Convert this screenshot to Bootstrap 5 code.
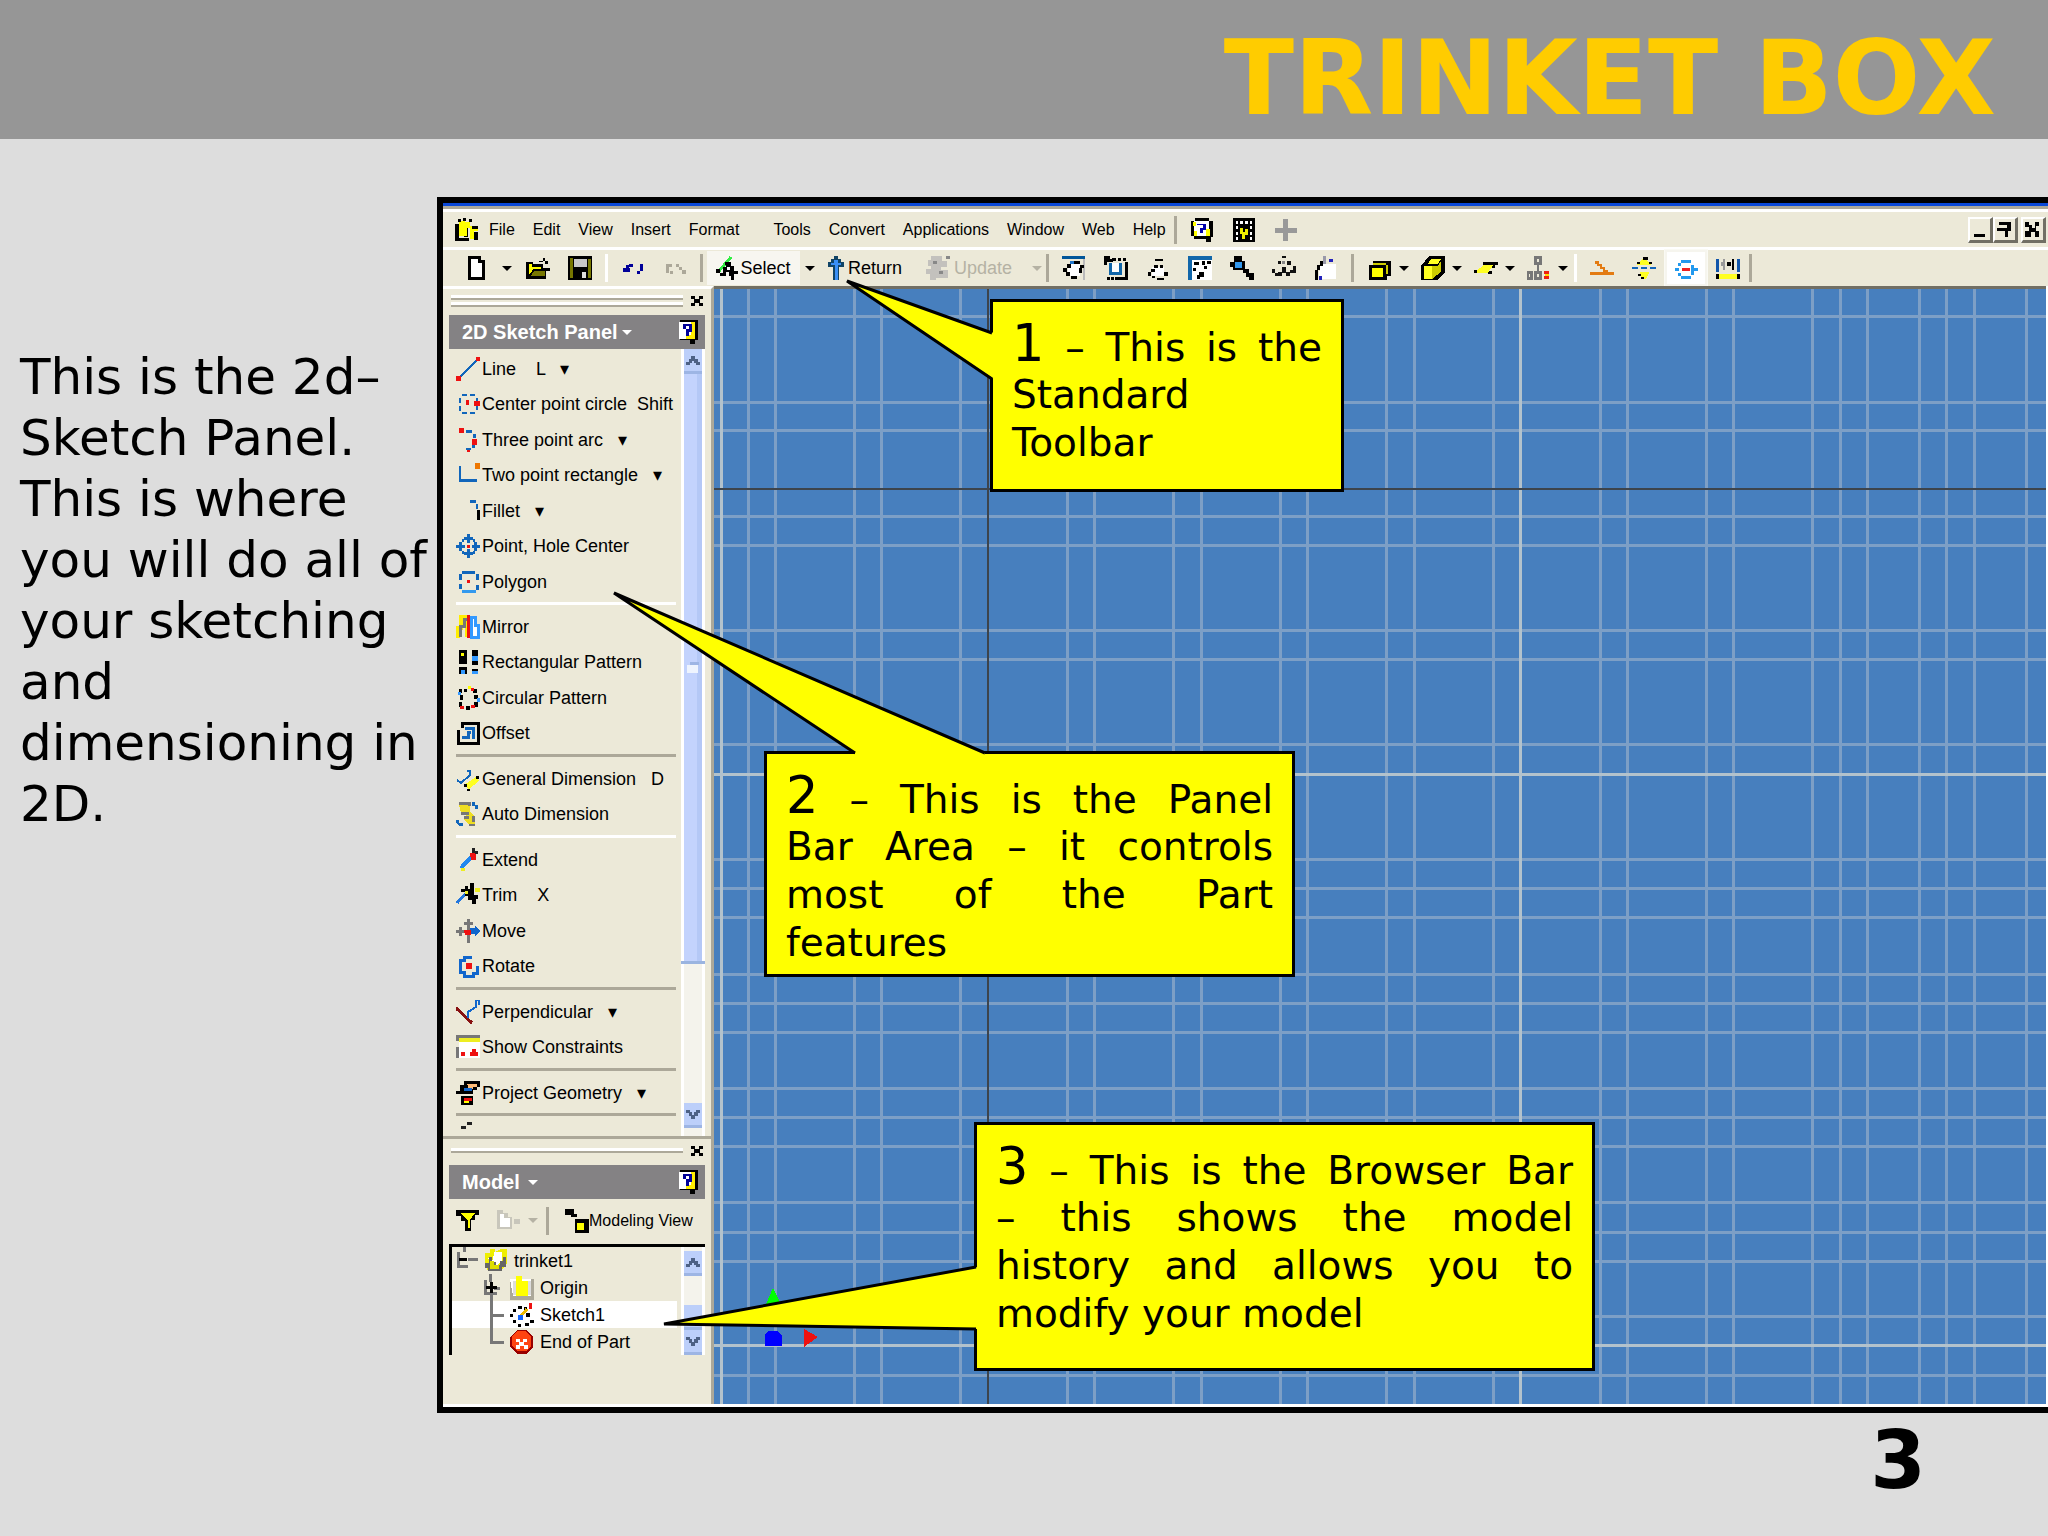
<!DOCTYPE html>
<html lang="en">
<head>
<meta charset="utf-8">
<meta name="viewport" content="width=device-width, initial-scale=1">
<title>Trinket Box</title>
<link href="https://cdn.jsdelivr.net/npm/bootstrap@5.3.0/dist/css/bootstrap.min.css" rel="stylesheet">
<style>
body{background:#ddd;color:#000;font-family:"DejaVu Sans",Verdana,sans-serif}
.slide-head{background:#969696;height:139px;padding:16px 52px 0 0}
.slide-title{color:#fc0;font-size:103px;line-height:120px;font-weight:700}
.slide-note{width:437px;padding:208px 0 0 20px;font-size:50px;line-height:61px}
.slide-no{font-size:80px;line-height:88px;padding-right:122px;font-weight:700}
.app{border:6px solid #000;border-right:0;margin-top:58px;background:#ece9d8;font-family:"Liberation Sans",Arial,sans-serif;font-size:18px;line-height:24px;position:relative;min-width:0}
.app button{background:none;border:0;padding:0;color:#000;line-height:24px}
.app svg{shape-rendering:crispEdges;flex:none}
.frame-top{height:9px;background:linear-gradient(#0a48d8 0 3px,#aca899 3px 6px,#fff 6px)}
.menus{height:35px;padding-left:12px}
.menus ul{gap:18px;margin-left:10px;font-size:16px}
.bar-line{height:3px;background:#fff}
.tools{height:36px;padding-left:12px;background:#ece9d8}
.ic{width:24px;height:24px}
.tb{width:42px;height:36px;display:flex;align-items:center;justify-content:center}
.app .combo{width:53px;padding-left:10px;gap:7px;justify-content:flex-start}
.app .drop{width:20px;height:36px;display:flex;align-items:center;justify-content:center}
.caret{width:0;height:0;border:5px solid transparent;border-top-color:currentColor;border-bottom:0;display:inline-block}
.vsep{width:3px;height:28px;background:#aca899;margin:0 4px;flex:none}
.vsep.lit{background:#fff}
.app .picked{background:#fff;border:2px solid #f6f5ee;outline:1px solid #fafaf4}
.app .select-tool{width:93px;height:34px;background:#f7f6f0}
.app .ghost{color:#b5b2a4}
.win-btns{margin-left:auto;gap:3px;padding-right:2px}
.app .wb{width:25px;height:26px;border:2px solid #fff;border-right:3px solid #716f64;border-bottom:3px solid #716f64}
.work{border-bottom:3px solid #fff;border-right:2px solid #fff}
.side{width:271px;border-right:3px solid #aca899;border-top:3px solid #fff;flex:none}
.grip{margin:5px 8px 0;gap:8px;height:13px}
.grip i{flex:1;height:12px;background:linear-gradient(#fff 0 3px,#aca899 3px 5px,#ece9d8 5px 7px,#fff 7px 10px,#aca899 10px)}
.grip.single i{height:5px;background:linear-gradient(#fff 0 3px,#aca899 3px)}
.cap{background:#848284;color:#fff;height:34px;margin:0 6px;padding:0 4px 0 13px;font-weight:700;font-size:20px}
.tool-area{height:787px;padding-left:8px}
.tool-list{width:230px;padding:2px 0 0 5px;height:787px;overflow:hidden}
.group{border-bottom:3px solid #aca899;padding-bottom:3px;margin-bottom:4px;width:220px}
.group.lit{border-color:#fff}
.tool{height:35px;display:flex;align-items:center;gap:2px;white-space:pre;font-size:18px}
.tool:nth-child(even){height:36px}
.sb{width:24px;background:linear-gradient(90deg,#fff 0 3px,#f4f3ec 3px 21px,#fff 21px)}
.thumb{background:linear-gradient(90deg,#fff 0 3px,#c3d3fd 3px 16px,#b4c8f6 16px 21px,#fff 21px);height:590px;border-bottom:3px solid #9ab4e0}
.app .sbb{width:18px;height:25px;margin:0 3px;background:#bccffa;border-bottom:3px solid #9db5e4;display:flex;align-items:center;justify-content:center}
.split{height:3px;background:#aca899}
.browse-tools{height:43px;padding:0 8px 0 13px;font-size:16px}
.tree-box{border:3px solid #000;border-width:3px 0 0 3px;margin:2px 6px 49px;height:111px}
.tree{list-style:none;flex:1}
.tree li{height:27px;display:flex;align-items:center;gap:6px;white-space:nowrap;position:relative}
.tree .picked-row{background:#fff;margin-right:4px}
.canvas{background:#477fbe;border-top:3px solid #716f64;min-width:0;position:relative}
.canvas>svg{position:absolute;inset:0;width:100%;height:100%}
.callout{position:absolute;background:#ff0;border:3px solid #000;padding:18px 19px 0;font-family:"DejaVu Sans",Verdana,sans-serif;font-size:39px;line-height:48px}
.callout span{display:block;text-align:justify;text-align-last:justify;white-space:nowrap}
.callout span:last-child{text-align-last:left}
.callout span:nth-of-type(2){margin-top:-3px}
.callout .lead-line{height:54px}
.callout b{font-weight:400;font-size:51px}
.callout svg{position:absolute;overflow:visible;shape-rendering:auto;left:-3px;top:-3px;width:1px;height:1px}
.c1{left:547px;top:96px;width:354px;height:193px}
.c2{left:321px;top:548px;width:531px;height:226px}
.c3{left:531px;top:919px;width:621px;height:249px}
</style>
<script src="https://cdn.jsdelivr.net/npm/bootstrap@5.3.0/dist/js/bootstrap.bundle.min.js"></script>
</head>
<body class="overflow-x-hidden">
<svg class="d-none" xmlns="http://www.w3.org/2000/svg">
<symbol id="logo" viewBox="0 0 24 24"><path d="M0 6h4v14h10v3H0zM9 5h4v14H9zM19 14h4v8h-4z"/><path d="M4 3h6v15H4zM10 4h5v4h8v5h-4v8h-4V10h-3v8h-2z" fill="#ff0"/><path d="M3 1h3v3H3zM8 0h3v3H8zM14 1h3v3h-3zM17 8h6v3h-6z"/></symbol>
<symbol id="help" viewBox="0 0 24 26"><path d="M4 0h16v3h4v18h-2v5h-6v-3H3v-3H0V3h4z"/><path d="M3 3h17v17H3z" fill="#fff"/><path d="M2 4h4v5H2zM16 12h5v7h-5zM3 14h4v5H3z" fill="#ff0"/><path d="M7 6h9v7h-3v3h-3v-5h3V8H7z" fill="#00a"/></symbol>
<symbol id="helpb" viewBox="0 0 24 26"><path d="M2 0h20v22h-3v4h-6v-4H2z"/><path d="M1 2h18v19H1z" fill="#fff"/><path d="M14 2h5v19h-5zM9 16h5v5H9z" fill="#fe0"/><path d="M6 4h9v9h-3v4H9v-7h3V7H9v3H6z" fill="#009"/></symbol>
<symbol id="film" viewBox="0 0 24 26"><path d="M0 0h24v26H0z"/><path d="M3 3h3v3H3zM3 9h3v3H3zM3 15h3v3H3zM3 21h3v3H3zM18 9h3v3h-3zM18 15h3v3h-3zM18 21h3v3h-3zM8 3h3v4H8zM13 3h3v3h-3zM18 3h3v3h-3z" fill="#fff"/><path d="M8 11h3v4h2v-3h3v6h-3v5h-3v-6H8z" fill="#ee0"/></symbol>
<symbol id="plus" viewBox="0 0 24 24"><path d="M9 1h5v9h9v5h-9v8H9v-8H1v-5h8z" fill="#999"/></symbol>
<symbol id="new" viewBox="0 0 24 24"><path d="M4 0h13v4h4v20H4z"/><path d="M7 3h7v4h4v14H7z" fill="#fff"/></symbol>
<symbol id="open" viewBox="0 0 26 24"><path d="M0 5h8v3h10v4h8v3h-4v9H0z"/><path d="M3 8h4v3h9v2H8l-5 7z" fill="#ff0"/><path d="M5 21l4-6h12v6z" fill="#770"/><path d="M14 4h4v2h-4zM18 1h3v3h-3zM21 4h3v4h-3z"/></symbol>
<symbol id="save" viewBox="0 0 24 24"><path d="M0 0h24v24H0z"/><path d="M2 2h3v20H2zM20 3h3v19h-3z" fill="#770"/><path d="M6 3h13v8H6z" fill="#c8c8c8"/><path d="M14 16h4v6h-4z" fill="#ddd"/></symbol>
<symbol id="undo" viewBox="0 0 24 24"><path d="M2 12h3V9h3v3h1v4H2zM8 8h4v3H8zM19 8h3v7h-3zM16 15h3v3h-3z" fill="#009"/></symbol>
<symbol id="redo" viewBox="0 0 24 24"><path d="M3 8h6v3H6v6H3zM7 15h3v3H7zM13 8h3v3h3v3h4v4h-4v-4h-3v-3h-3z" fill="#aca899"/></symbol>
<symbol id="select" viewBox="0 0 24 24"><path d="M3 15L15 1" fill="none" stroke="#3e4" stroke-width="3"/><path d="M0 13h4v4h4v3H4v-3H0zM9 6h6v4h3v14h-3v-4h-2v-4h-3v4H7v-9h3zM18 15h4v3h-4z"/><path d="M11 11h3v3h-3z" fill="#fff"/></symbol>
<symbol id="ret" viewBox="0 0 16 24"><path d="M6 0h4v3h3v3h3v5h-5v13H5V11H0V6h3V3h3z" fill="#146"/><path d="M6 4h4v3h3v2h-3v15H7V9H3V7h3z" fill="#3a8ff5"/></symbol>
<symbol id="upd" viewBox="0 0 24 24"><path d="M5 0h11v5h5v6h-6v3h7v8H10v2H4v-6H0v-5h5v-3H2V4h3z" fill="#c3c1bd"/><path d="M7 5h4v3H7zM13 15h4v3h-4zM20 0h4v3h-4z" fill="#888"/></symbol>
<symbol id="v1" viewBox="0 0 24 24"><path d="M0 0h23v3H0z" fill="#059"/><path d="M21 3h2v21h-2z" fill="#bbb"/><path d="M6 8h12v12H6z" fill="#fff"/><path d="M12 5h6v3h-6zM5 8h4v4H5zM1 12h4v4H1zM18 9h4v3h-4zM17 12h3v5h-3zM4 16h4v4H4zM9 20h6v3H9z"/><path d="M8 5h4v3H8z" fill="#27c"/></symbol>
<symbol id="v2" viewBox="0 0 24 24"><path d="M0 0h6v3h3v3H3v3H0zM8 2h4v3H8zM14 2h3v3h-3zM19 2h3v3h-3zM21 6h3v18H11v-3h10zM3 21h3v3H3zM7 21h3v3H7z"/><path d="M5 7h3v9h7V7h3v12H5z" fill="#16a"/><path d="M8 7h7v9H8z" fill="#fff"/></symbol>
<symbol id="v3" viewBox="0 0 24 24"><path d="M6 11h12v9H6z" fill="#fff"/><path d="M9 3h8v2H9zM5 13h4v3H5zM14 9h3v3h-3zM8 9h4v3H8zM2 16h3v4H2zM6 20h3v2H6zM11 22h7v2h-7zM18 16h4v4h-4z"/></symbol>
<symbol id="v4" viewBox="0 0 24 24"><path d="M0 0h24v24H0z" fill="#16a"/><path d="M4 4h20v20H4z" fill="#fff"/><path d="M6 6h5v3H6zM14 5h3v4h-3zM19 5h4v3h-4zM5 12h3v3H5zM11 16h5v5h-5zM9 19h3v4H9zM16 10h3v3h-3z"/></symbol>
<symbol id="v5" viewBox="0 0 24 24"><path d="M4 0h8v5h3v8h4v4h5v7h-5v-3h-3v-4h-3v-3H3v-3H0V6h4z"/><path d="M5 6h7v6H5z" fill="#39e"/></symbol>
<symbol id="v6" viewBox="0 0 24 24"><path d="M10 0h4v2h-4zM6 5h3v3H6zM15 5h4v4h-4zM0 13h3v4H0zM21 10h3v7h-3zM10 11h4v5h4v4h-4v-3h-4v3H6v-4h4zM18 14h3v3h-3zM3 17h3v3H3z" fill="#111"/><path d="M10 5h3v3h-3z" fill="#888"/></symbol>
<symbol id="v7" viewBox="0 0 24 24"><path d="M6 8h16v15H5z" fill="#fff"/><path d="M3 9h3v5H3zM1 14h3v10H1zM6 5h3v5H6z"/><path d="M9 0h3v8H9z" fill="#99a"/><path d="M15 3h4v3h-4zM5 20h3v4H5z" fill="#22b"/></symbol>
<symbol id="m1" viewBox="0 0 24 24"><path d="M1 9h4V5h18v15h-4v4H1z"/><path d="M4 12h11v9H4z" fill="#ff0"/><path d="M5 7h13v2H5zM18 9h2v9h-2z" fill="#cc0"/></symbol>
<symbol id="m2" viewBox="0 0 24 24"><path d="M0 10l8-10h16v16l-8 8H0z"/><path d="M3 10h8v13H3zM7 8l3-5h10l-3 5z" fill="#ff2"/><path d="M11 10h6l3-5v10l-4 4-5 4z" fill="#cc0"/></symbol>
<symbol id="m3" viewBox="0 0 26 24"><path d="M0 14h4v3H0zM10 6h16v3h-3v3h-3V9H10zM15 15h4v3h-4z"/><path d="M3 15l7-6h11l-6 8H3z" fill="#ff2"/></symbol>
<symbol id="m4" viewBox="0 0 26 24"><path d="M9 1h6v6H9zM1 17h4v6H1zM9 17h6v6H9zM12 8v9" fill="none" stroke="#777" stroke-width="3"/><path d="M18 15h6v4h-6zM18 21h6v3h-6z" fill="#e21"/><path d="M19 19h5v2h-5z" fill="#fd0"/></symbol>
<symbol id="k1" viewBox="0 0 24 24"><path d="M0 16h24v3H0zM5 5h4v3h3v3h3v3h3v2h-5v-3h-3v-3H7V8H5z" fill="#e37b12"/></symbol>
<symbol id="k2" viewBox="0 0 26 24"><path d="M13 1l8 8H5zM8 16h11l-4 8h-4z" fill="#ff2"/><path d="M12 0h5v3h-5zM5 5h4v3H5zM18 5h4v3h-4zM7 18h3v3H7zM10 22h3v2h-3z"/><path d="M0 11h7v2H0zM10 11h6v2h-6zM19 11h7v2h-7z" fill="#16b"/></symbol>
<symbol id="k3" viewBox="0 0 24 24"><path d="M7 4h10v3H7zM4 7h3v3H4zM1 12h4v3H1zM4 17h3v3H4zM7 20h10v3H7zM17 9h3v3h4v3h-4v4h-3z" fill="#29e"/><path d="M8 12h8v3H8z" fill="#e22"/></symbol>
<symbol id="k4" viewBox="0 0 26 24"><path d="M0 2h3v14H0zM23 2h3v14h-3z" fill="#15a"/><path d="M3 18h20v6H3z" fill="#ff2"/><path d="M0 18h3v6H0zM23 18h3v6h-3zM17 2h3v12h-3zM12 5h4v5h-4z"/><path d="M5 5h4v5H5zM8 2h2v12H8z" fill="#999"/></symbol>
<symbol id="s-line" viewBox="0 0 24 24"><path d="M3 21L21 3" stroke="#16b" stroke-width="2"/><path d="M0 19h5v5H0zM20 0h4v4h-4z" fill="#e11"/></symbol>
<symbol id="s-circ" viewBox="0 0 24 24"><path d="M6 3h5M14 3h5M4 6v5M4 14v5M6 21h5M14 21h5M21 18v-4M21 9V6" fill="none" stroke="#16b" stroke-width="2"/><path d="M10 8h3v5h-3zM18 9h6v5h-6z" fill="#e11"/></symbol>
<symbol id="s-arc" viewBox="0 0 24 24"><path d="M10 2h6v3h-6zM17 6h3v4h-3zM16 17h3v3h-3zM10 20h5v2h-5z" fill="#16b"/><path d="M3 0h5v5H3zM16 11h5v6h-5zM11 22h3v2h-3z" fill="#e11"/></symbol>
<symbol id="s-rect" viewBox="0 0 24 24"><path d="M3 3h2v13h16v3H3z" fill="#16b"/><path d="M19 0h5v6h-5z" fill="#e70"/></symbol>
<symbol id="s-fil" viewBox="0 0 24 24"><path d="M14 1h6v3h-6zM20 5h2v5h-2z" fill="#16b"/><path d="M21 11h3v10h-3z"/></symbol>
<symbol id="s-pt" viewBox="0 0 24 24"><path d="M11 0h3v3h3v3h-3v3h-3V6H8V3h3zM11 24h3v-3h3v-3h-3v-3h-3v3H8v3h3zM0 11h3V8h3v3h3v3H6v3H3v-3H0zM24 11h-3V8h-3v3h-2v3h2v3h3v-3h3z" fill="#16b"/><path d="M6 5h2v3H6zM17 5h2v3h-2zM6 17h2v3H6zM17 17h2v3h-2z" fill="#16b"/><path d="M11 11h3v3h-3z" fill="#e11"/></symbol>
<symbol id="s-poly" viewBox="0 0 24 24"><path d="M6 2h13M4 4v6M4 14v5M21 4v6M21 15v5" stroke="#16b" stroke-width="3" fill="none"/><path d="M6 20h14v3H6z" fill="#39e"/><path d="M11 10h3v3h-3z" fill="#e11"/></symbol>
<symbol id="s-mir" viewBox="0 0 24 24"><path d="M2 23V13h3V2h6v20" fill="none" stroke="#fe0" stroke-width="4"/><path d="M4 22V11h4V4h3" fill="none" stroke="#777" stroke-width="3"/><path d="M15 22V2h4v8h3v12z" fill="#fff" stroke="#39f" stroke-width="3"/><path d="M11 0h3v23h-3z" fill="#e11"/></symbol>
<symbol id="s-rp" viewBox="0 0 24 24"><path d="M3 0h8v14H3zM3 17h8v7H3zM16 0h6v6h-6zM16 11h6v4h-6zM16 19h6v3h-6z"/><path d="M5 3h3v3H5z" fill="#ff0"/><path d="M16 6h6v5h-6zM16 21h6v3h-6zM5 20h4v4H5z" fill="#39f"/></symbol>
<symbol id="s-cp" viewBox="0 0 24 24"><path d="M3 3h3v4H3zM4 9h3v5H4zM3 16h3v5H3zM8 3h3v3H8zM17 3h4v4h-4zM18 9h4v4h-4zM18 16h4v5h-4zM10 20h4v4h-4z"/><path d="M12 0h3v3h-3z" fill="#ff0"/><path d="M15 2h3v3h-3zM4 20h4v3H4zM15 19h4v3h-4z" fill="#e11"/><path d="M2 6h3v3H2zM21 12h3v4h-3z" fill="#39f"/></symbol>
<symbol id="s-off" viewBox="0 0 24 24"><path d="M6 7V2h16v20H2V9" fill="none" stroke="#000" stroke-width="3"/><path d="M6 16h6v-5h3M9 7h8v11" fill="none" stroke="#16b" stroke-width="3"/></symbol>
<symbol id="s-gd" viewBox="0 0 24 24"><path d="M1 13l4 3 9-8V4h-3" fill="none" stroke="#16b" stroke-width="2"/><path d="M8 18l12-8 3 4-10 8z" fill="#ff2"/><path d="M20 9h3v3h-3zM8 17h3v3H8zM11 22h3v2h-3z"/></symbol>
<symbol id="s-ad" viewBox="0 0 24 24"><path d="M3 1h11v8l5 6v8h-6l-5-6 3-5-7-3z" fill="#ed2"/><path d="M3 1h10v3M5 11h8M8 15h5M17 14v6M13 23h6" fill="none" stroke="#777" stroke-width="3"/><path d="M16 0h3v3h3v4h-3V4h-3zM0 18h3v3h4v3H4l-4-3z" fill="#16b"/></symbol>
<symbol id="s-ext" viewBox="0 0 24 24"><path d="M5 20L16 8" stroke="#28e" stroke-width="4"/><path d="M14 5h6v7h-5z" fill="#e11"/><path d="M16 0h3v5h-3zM19 3h3v3h-3z" fill="#222"/><path d="M5 20h4v3H5z" fill="#ee2"/></symbol>
<symbol id="s-trim" viewBox="0 0 24 24"><path d="M1 20L12 8" stroke="#27d" stroke-width="3"/><path d="M14 0h4v12h4v4h-2v5h-4v-4h-4v-4H9V9H5V6h4V3h3v3h2z"/><path d="M19 5h5v4h-5zM9 8h3v3H9z" fill="#ee2"/></symbol>
<symbol id="s-move" viewBox="0 0 24 24"><path d="M11 0h3v24h-3zM8 3h9v3H8zM0 11h12v3H0zM3 8h3v9H3z" fill="#777"/><path d="M14 9h5V6l5 6-5 6v-3h-5z" fill="#16c"/><path d="M8 11h7v5H9z" fill="#e11"/></symbol>
<symbol id="s-rot" viewBox="0 0 24 24"><path d="M16 3H8v3H4v12h4v4h9v-3h4v-7" fill="none" stroke="#16c" stroke-width="3"/><path d="M10 9h6v6h-6z" fill="#e11"/></symbol>
<symbol id="s-perp" viewBox="0 0 24 24"><path d="M0 8l16 15" stroke="#811" stroke-width="3"/><path d="M12 18v-6l8-5V0h3v5" fill="none" stroke="#16c" stroke-width="2"/></symbol>
<symbol id="s-show" viewBox="0 0 24 24"><path d="M3 6h21v17H3z" fill="#fff"/><path d="M0 0h24v3H0zM0 3h3v3H0zM0 12h3v11H0z" fill="#777"/><path d="M3 3h21v4H3z" fill="#ee2"/><path d="M5 17h4v4H5zM16 14h4v3h2v4h-8v-4h2z" fill="#e11"/></symbol>
<symbol id="s-proj" viewBox="0 0 24 24"><path d="M8 0h16v6h-3v3h-4v4H0v-3h4V4h4zM5 15h12v9H5z"/><path d="M11 3h10v3h-4v2h-4z" fill="#fb7"/><path d="M8 7h8v3H8z" fill="#16c"/><path d="M8 17h8v3H8z" fill="#e11"/><path d="M8 20h5v2H8z" fill="#ff0"/></symbol>
<symbol id="s-edit" viewBox="0 0 24 24"><path d="M11 1h5v3h-5zM5 5h5v3H5z" fill="#222"/></symbol>
<symbol id="filter" viewBox="0 0 24 24"><path d="M0 1h23v5h-4v5h-4v11H9V12H5V7H0z"/><path d="M4 4h15l-5 7v8h-2v-8z" fill="#ff0"/></symbol>
<symbol id="docg" viewBox="0 0 24 24"><path d="M1 1h6v3h5v4h4v12H1z" fill="#c8c6bb"/><path d="M4 5h4v4h6v9H4z" fill="#fff"/><path d="M18 10h6v5h-6z" fill="#c8c6bb"/></symbol>
<symbol id="modl" viewBox="0 0 24 24"><path d="M0 0h9v5h3v3H6V6H0zM10 10h14v14H10z"/><path d="M12 14h7v7h-7z" fill="#ff0"/></symbol>
<symbol id="part" viewBox="0 0 24 24"><path d="M1 4h5V0h5v3l6-3h6v14l-5 7H3v-6H1z" fill="#ee0"/><path d="M10 3h8v8l-5 6-5-3-4-5 5 2z" fill="#fff"/><path d="M5 8h3v5h4v3h4v-4h3V8h3v10h-4v4H4v-3H1v-5h4z" fill="#666"/><path d="M6 12h4v4h5v4H6z" fill="#dd0"/></symbol>
<symbol id="fold" viewBox="0 0 24 24"><path d="M0 3h24v21H0z" fill="#aca899"/><path d="M0 3h21v17H3z" fill="#fff"/><path d="M3 5h18v14H3z" fill="#ddd"/><path d="M6 0h6v5h6v15H6z" fill="#ff0"/></symbol>
<symbol id="sket" viewBox="0 0 24 24"><path d="M0 11h3v3H0zM3 6h3v3H3zM8 3h4v3H8zM3 17h3v3H3zM8 21h3v3H8zM15 20h4v3h-4zM20 17h4v3h-4zM16 10h4v4h-4zM14 4h3v5h-3z"/><path d="M9 15l8-9" stroke="#eb0" stroke-width="3"/><path d="M19 0h3v6h-3z" fill="#e11"/><path d="M8 12h5v5H8z" fill="#16f"/></symbol>
<symbol id="endp" viewBox="0 0 24 24"><path d="M7 0h10l6 7v10l-6 7H7l-7-7V7z" fill="#900"/><path d="M7 1h9l5 6v9l-5 5H7l-5-5V7z" fill="#f41"/><path d="M6 9h4v3h3V9h4v3h-3v3h4v4h-4v-3h-4v3H6v-4h3v-3H6z" fill="#fff"/></symbol>
<symbol id="up" viewBox="0 0 12 8"><path d="M4 0h4v3h2v2h2v3H9V6H7V4H5v2H3v2H0V5h2V3h2z" fill="#4d6185"/></symbol>
<symbol id="dn" viewBox="0 0 12 8"><path d="M4 8h4V5h2V3h2V0H9v2H7v2H5V2H3V0H0v3h2v2h2z" fill="#4d6185"/></symbol>
<symbol id="xx" viewBox="0 0 12 10"><path d="M0 0h4v3h4V0h4v3H9v4h3v3H8V7H4v3H0V7h3V3H0z"/></symbol>
</svg>

<header class="slide-head d-flex align-items-center justify-content-end"><h1 class="slide-title m-0">TRINKET BOX</h1></header>
<main class="d-flex">
<p class="slide-note flex-shrink-0 m-0">This is the 2d–<wbr>Sketch Panel. This is where you will do all of your sketching and dimensioning in 2D.</p>
<section class="app flex-grow-1">
<div class="frame-top"></div>
<nav class="menus d-flex align-items-center">
<svg class="ic"><use href="#logo"/></svg>
<ul class="list-unstyled d-flex mb-0">
<li><button>File</button></li><li><button>Edit</button></li><li><button>View</button></li><li><button>Insert</button></li><li><button>Format</button></li><li class="ms-3"><button>Tools</button></li><li><button>Convert</button></li><li><button>Applications</button></li><li><button>Window</button></li><li><button>Web</button></li><li><button>Help</button></li></ul>
<span class="vsep ms-2"></span>
<button class="tb" aria-label="Help topics"><svg class="ic"><use href="#help"/></svg></button>
<button class="tb" aria-label="Show me"><svg class="ic"><use href="#film"/></svg></button>
<button class="tb" aria-label="Add"><svg class="ic"><use href="#plus"/></svg></button>
<div class="win-btns d-flex"><div class="d-flex"><button class="wb" aria-label="Minimize"><svg width="18" height="18" class="d-block"><path d="M4 14h11v3H4z"/></svg></button><button class="wb" aria-label="Restore"><svg width="18" height="18" class="d-block"><path d="M4 2h12v9h-3v6h-3v-6H2V8h10V5H4z"/></svg></button></div><button class="wb" aria-label="Close"><svg width="18" height="18" class="d-block"><path d="M2 2h4v3h3v3h3V2h4v4h-3v5h3v6h-4v-5H8v5H2v-6h4V7H2z"/></svg></button></div>
</nav>
<div class="bar-line"></div>
<div class="tools d-flex align-items-center" role="toolbar" aria-label="Standard">
<button class="tb" aria-label="New"><svg class="ic"><use href="#new"/></svg></button><button class="drop" aria-label="New options"><i class="caret"></i></button>
<button class="tb" aria-label="Open"><svg class="ic"><use href="#open"/></svg></button><button class="tb" aria-label="Save"><svg class="ic"><use href="#save"/></svg></button>
<span class="vsep lit"></span>
<button class="tb" aria-label="Undo"><svg class="ic"><use href="#undo"/></svg></button><button class="tb" aria-label="Redo"><svg class="ic"><use href="#redo"/></svg></button>
<span class="vsep"></span>
<button class="tb select-tool"><svg class="ic"><use href="#select"/></svg>Select</button><button class="drop" aria-label="Select options"><i class="caret"></i></button>
<button class="d-flex align-items-center ms-2 gap-1"><svg width="16" height="24"><use href="#ret"/></svg>Return</button>
<button class="ghost d-flex align-items-center ms-4 gap-1" disabled><svg class="ic"><use href="#upd"/></svg>Update<i class="caret ms-3"></i></button>
<span class="vsep"></span>
<button class="tb" aria-label="Zoom all"><svg class="ic"><use href="#v1"/></svg></button><button class="tb" aria-label="Zoom window"><svg class="ic"><use href="#v2"/></svg></button><button class="tb" aria-label="Zoom"><svg class="ic"><use href="#v3"/></svg></button><button class="tb" aria-label="Pan"><svg class="ic"><use href="#v4"/></svg></button><button class="tb" aria-label="Zoom selected"><svg class="ic"><use href="#v5"/></svg></button><button class="tb" aria-label="Rotate"><svg class="ic"><use href="#v6"/></svg></button><button class="tb" aria-label="Look at"><svg class="ic"><use href="#v7"/></svg></button>
<span class="vsep"></span>
<button class="tb combo" aria-label="Display"><svg class="ic"><use href="#m1"/></svg><i class="caret"></i></button><button class="tb combo" aria-label="Camera"><svg class="ic"><use href="#m2"/></svg><i class="caret"></i></button><button class="tb combo" aria-label="Shadow"><svg class="ic"><use href="#m3"/></svg><i class="caret"></i></button><button class="tb combo" aria-label="Component"><svg class="ic"><use href="#m4"/></svg><i class="caret"></i></button>
<span class="vsep lit"></span>
<button class="tb" aria-label="Construction"><svg class="ic"><use href="#k1"/></svg></button><button class="tb" aria-label="Centerline"><svg class="ic"><use href="#k2"/></svg></button><button class="tb picked" aria-label="Center point"><svg class="ic"><use href="#k3"/></svg></button><button class="tb" aria-label="Driven dimension"><svg class="ic"><use href="#k4"/></svg></button>
<span class="vsep mx-0"></span>
</div>
<div class="work d-flex">
<aside class="side">
<div class="grip d-flex align-items-center"><i></i><svg width="12" height="10"><use href="#xx"/></svg></div>
<div class="cap d-flex align-items-center mt-2"><span>2D Sketch Panel</span><i class="caret ms-1"></i><svg class="ic ms-auto"><use href="#helpb"/></svg></div>
<div class="tool-area d-flex">
<div class="tool-list">
<div class="group lit"><button class="tool"><svg class="ic"><use href="#s-line"/></svg>Line    L   ▾</button><button class="tool"><svg class="ic"><use href="#s-circ"/></svg>Center point circle  Shift</button><button class="tool"><svg class="ic"><use href="#s-arc"/></svg>Three point arc   ▾</button><button class="tool"><svg class="ic"><use href="#s-rect"/></svg>Two point rectangle   ▾</button><button class="tool"><svg class="ic"><use href="#s-fil"/></svg>Fillet   ▾</button><button class="tool"><svg class="ic"><use href="#s-pt"/></svg>Point, Hole Center</button><button class="tool"><svg class="ic"><use href="#s-poly"/></svg>Polygon</button></div>
<div class="group"><button class="tool"><svg class="ic"><use href="#s-mir"/></svg>Mirror</button><button class="tool"><svg class="ic"><use href="#s-rp"/></svg>Rectangular Pattern</button><button class="tool"><svg class="ic"><use href="#s-cp"/></svg>Circular Pattern</button><button class="tool"><svg class="ic"><use href="#s-off"/></svg>Offset</button></div>
<div class="group lit"><button class="tool"><svg class="ic"><use href="#s-gd"/></svg>General Dimension   D</button><button class="tool"><svg class="ic"><use href="#s-ad"/></svg>Auto Dimension</button></div>
<div class="group"><button class="tool"><svg class="ic"><use href="#s-ext"/></svg>Extend</button><button class="tool"><svg class="ic"><use href="#s-trim"/></svg>Trim    X</button><button class="tool"><svg class="ic"><use href="#s-move"/></svg>Move</button><button class="tool"><svg class="ic"><use href="#s-rot"/></svg>Rotate</button></div>
<div class="group"><button class="tool"><svg class="ic"><use href="#s-perp"/></svg>Perpendicular   ▾</button><button class="tool"><svg class="ic"><use href="#s-show"/></svg>Show Constraints</button></div>
<div class="group"><button class="tool"><svg class="ic"><use href="#s-proj"/></svg>Project Geometry   ▾</button></div>
<svg class="ic"><use href="#s-edit"/></svg>
</div>
<div class="sb d-flex flex-column"><button class="sbb" aria-label="Scroll up"><svg width="14" height="9"><use href="#up"/></svg></button><div class="thumb d-flex align-items-center justify-content-center"><svg width="12" height="12"><path d="M3 0h9v3H3z" fill="#9db5e4"/><path d="M0 3h11v8H0z" fill="#eef4fe"/></svg></div><button class="sbb mt-auto mb-2" aria-label="Scroll down"><svg width="14" height="9"><use href="#dn"/></svg></button></div>
</div>
<div class="split"></div>
<div class="grip single d-flex align-items-center"><i></i><svg width="12" height="10"><use href="#xx"/></svg></div>
<div class="cap d-flex align-items-center mt-2"><span>Model</span><i class="caret ms-2"></i><svg class="ic ms-auto"><use href="#helpb"/></svg></div>
<div class="browse-tools d-flex align-items-center">
<button class="d-flex" aria-label="Filter"><svg class="ic"><use href="#filter"/></svg></button>
<button class="ghost d-flex align-items-center ms-3" aria-label="Find"><svg class="ic"><use href="#docg"/></svg><i class="caret ms-2"></i></button>
<span class="vsep ms-2 me-3"></span>
<button class="d-flex align-items-center text-nowrap"><svg class="ic"><use href="#modl"/></svg>Modeling View</button></div>
<div class="tree-box d-flex">
<ul class="tree p-0 m-0">
<li><svg width="26" height="27"><path d="M6 5v14h10M16 12h10M12 0v5" fill="none" stroke="#777" stroke-width="3"/><path d="M7 11h8v3H7z"/></svg><svg class="ic"><use href="#part"/></svg>trinket1</li>
<li><svg width="24" height="27" class="ms-4 me-1"><path d="M13 0v8M8 6v13h12M17 14h7M14 19v8" transform="translate(1)" fill="none" stroke="#777" stroke-width="3"/><path d="M10 12h11v3H10zM14 8h3v11h-3z"/></svg><svg class="ic"><use href="#fold"/></svg>Origin</li>
<li class="picked-row"><svg width="28" height="27" class="ms-4"><path d="M15 0v27M15 14h13" fill="none" stroke="#777" stroke-width="3"/></svg><svg class="ic"><use href="#sket"/></svg>Sketch1</li>
<li><svg width="28" height="27" class="ms-4"><path d="M15 0v14h13" fill="none" stroke="#777" stroke-width="3"/></svg><svg class="ic"><use href="#endp"/></svg>End of Part</li>
</ul>
<div class="sb d-flex flex-column"><button class="sbb mt-1" aria-label="Scroll up"><svg width="14" height="9"><use href="#up"/></svg></button><button class="sbb mt-auto" aria-label="Scroll thumb"></button><button class="sbb" aria-label="Scroll down"><svg width="14" height="9"><use href="#dn"/></svg></button></div>
</div>
</aside>
<div class="canvas flex-grow-1">
<svg aria-label="Sketch grid"><g fill="none" stroke="#7d9fc6" stroke-width="3">
<path d="M34 0V2000M61 0V2000M140 0V2000M167 0V2000M246 0V2000M353 0V2000M380 0V2000M459 0V2000M487 0V2000M566 0V2000M593 0V2000M672 0V2000M700 0V2000M779 0V2000M886 0V2000M913 0V2000M992 0V2000M1019 0V2000M1098 0V2000M1126 0V2000M1153 0V2000M1205 0V2000M1232 0V2000M1260 0V2000M1312 0V2000"/>
<path d="M0 27H3000M0 113H3000M0 141H3000M0 227H3000M0 256H3000M0 341H3000M0 370H3000M0 455H3000M0 570H3000M0 599H3000M0 628H3000M0 685H3000M0 714H3000M0 743H3000M0 799H3000M0 828H3000M0 857H3000M0 913H3000M0 943H3000M0 972H3000M0 1027H3000M0 1086H3000"/>
<path d="M7 0V2000M806 0V2000M0 485H3000M0 1056H3000" stroke="#b3c2cc"/></g>
<path d="M274 0V2000M0 200H3000" stroke="#3d444c" stroke-width="2"/>
<path d="M59 999l8 16h-15z" fill="#0f0"/><path d="M54 1042h10l4 5v10H51v-11z" fill="#00f"/><path d="M90 1040l14 8-14 10z" fill="#e11"/></svg>
</div>
</div>
<div class="callout c1"><svg><path d="M4 34L-143 -18L4 80z" fill="#ff0"/><path d="M2 34L-143 -18L2 80" fill="none" stroke="#000" stroke-width="3"/></svg><span class="lead-line"><b>1</b> – This is the</span><span>Standard</span><span class="mt-0">Toolbar</span></div>
<div class="callout c2"><svg><path d="M91 2L-150 -158L221 2v3H91z" fill="#ff0"/><path d="M91 2L-150 -158L221 2" fill="none" stroke="#000" stroke-width="3"/></svg><span class="lead-line"><b>2</b> – This is the Panel</span><span>Bar Area – it controls</span><span>most of the Part</span><span>features</span></div>
<div class="callout c3"><svg><path d="M4 145L-310 202L4 207z" fill="#ff0"/><path d="M2 145L-310 202L2 207" fill="none" stroke="#000" stroke-width="3"/></svg><span class="lead-line"><b>3</b> – This is the Browser Bar</span><span>– this shows the model</span><span>history and allows you to</span><span>modify your model</span></div>
</section>
</main>
<footer class="slide-no text-end mt-1">3</footer>
</body>
</html>
